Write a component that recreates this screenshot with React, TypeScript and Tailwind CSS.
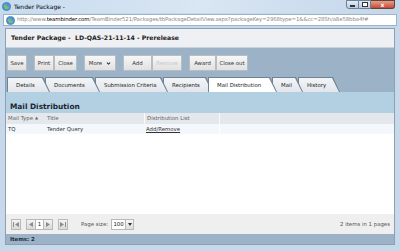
import { ChevronDown } from "lucide-react";

const toolbarGroups = [
  [{ label: "Save", w: "w-[20px]" }],
  [
    { label: "Print", w: "w-[20px]" },
    { label: "Close", w: "w-[23px]" },
  ],
  [{ label: "More", w: "w-[32px]", menu: true }],
  [
    { label: "Add", w: "w-[29px]" },
    { label: "Remove", w: "w-[30px]", disabled: true },
  ],
  [
    { label: "Award", w: "w-[27px]" },
    { label: "Close out", w: "w-[32px]" },
  ],
];

const tabs = [
  { label: "Details", w: "w-[43px]", z: "z-[7]" },
  { label: "Documents", w: "w-[55px]", z: "z-[6]" },
  { label: "Submission Criteria", w: "w-[73px]", z: "z-[5]" },
  { label: "Recipients", w: "w-[50px]", z: "z-[4]" },
  { label: "Mail Distribution", w: "w-[69px]", z: "z-[9]", active: true },
  { label: "Mail", w: "w-[31px]", z: "z-[3]" },
  { label: "History", w: "w-[42px]", z: "z-[2]" },
];

function Globe() {
  return (
    <svg width="9" height="9" viewBox="0 0 10 10">
      <circle cx="5" cy="5" r="4.5" fill="#4f93d6" />
      <path d="M2 3.5 Q4 2 5 4 T8 5 L7 8 Q5 7 3.5 8 Z" fill="#7cc26a" />
      <circle cx="5" cy="5" r="4.5" fill="none" stroke="#2f6fb0" strokeWidth="0.6" />
    </svg>
  );
}

function PagerBtn({ d }: { d: string }) {
  return (
    <div className="w-[10px] h-[11px] flex items-center justify-center bg-gradient-to-b from-[#f4f4f4] to-[#d9d9d9] border border-[#b9b9b9]">
      <svg width="6" height="5" viewBox="0 0 6 5">
        <path d={d} fill="#8c8c8c" />
      </svg>
    </div>
  );
}

export default function App() {
  return (
    <div className="w-[400px] h-[251px] flex flex-col overflow-hidden bg-[#c6d8ea] font-['DejaVu_Sans',sans-serif] text-[#222]">
      {/* Window title bar */}
      <div className="h-[13px] flex items-center bg-gradient-to-r from-[#c7dbef] via-[#d9e6f3] to-[#c3d6ea] pl-[2px]">
        <Globe />
        <span className="ml-[3px] text-[6px] text-black leading-none">Tender Package -</span>
        <div className="ml-auto flex items-start self-start mr-[5px]">
          <div className="w-[13px] h-[9px] border border-[#6b7f96] rounded-bl-[3px] bg-gradient-to-b from-[#e3ecf5] to-[#b9cbdd] flex items-end justify-center pb-[1px]">
            <div className="w-[5px] h-[1.5px] bg-white border-[0.5px] border-[#333]" />
          </div>
          <div className="w-[12px] h-[9px] border-y border-r border-[#6b7f96] bg-gradient-to-b from-[#e3ecf5] to-[#b9cbdd] flex items-center justify-center">
            <div className="w-[6px] h-[5px] border border-[#333] bg-white" />
          </div>
          <div className="w-[24px] h-[9px] border-y border-r border-[#6b4030] rounded-br-[3px] bg-gradient-to-b from-[#e2a090] to-[#c24a34] flex items-center justify-center text-white text-[6px] font-bold leading-none">
            x
          </div>
        </div>
      </div>

      {/* Address bar */}
      <div className="h-[14px] px-[3px] flex items-center">
        <div className="flex-1 h-[12px] bg-white border border-[#9db3c9] flex items-center pl-[2px] gap-[2px]">
          <Globe />
          <span className="text-[5.4px] text-[#8a8a8a] whitespace-nowrap leading-none tracking-[-0.1px]">
            http://www.<span className="text-black">teambinder.com</span>/TeamBinder521/Packages/tbPackageDetailView.aspx?packageKey=2968type=1&amp;&amp;cc=28Sh/a8e58bba4f#
          </span>
        </div>
      </div>

      {/* Page content */}
      <div className="flex-1 mx-[5px] mt-[1px] mb-[6px] flex flex-col bg-white border border-[#8aa0b6]">
        {/* Header */}
        <div className="h-[19px] bg-[#eef0f3] flex items-center pl-[5px] border-b border-[#c9d3dd]">
          <span className="text-[6.2px] font-bold text-[#222] whitespace-pre">
            Tender Package -  LD-QAS-21-11-14 - Prerelease
          </span>
        </div>

        {/* Toolbar and tabs */}
        <div className="bg-[#9cb2c6] pt-[7px] pl-[1px]">
          <div className="flex gap-[7px] h-[16px]">
            {toolbarGroups.map((g, i) => (
              <div key={i} className="flex">
                {g.map((b) => (
                  <div
                    key={b.label}
                    className={`${b.w} h-[16px] flex items-center justify-center gap-[4px] border border-[#b7bdc4] bg-gradient-to-b from-[#f7f7f7] to-[#e1e1e1] text-[5.4px] whitespace-nowrap ${
                      b.disabled ? "text-[#c8c8c8]" : "text-[#333]"
                    }`}
                  >
                    {b.label}
                    {b.menu && <ChevronDown size={5} strokeWidth={5} className="text-[#333]" />}
                  </div>
                ))}
              </div>
            ))}
          </div>

          <div className="flex h-[15px] mt-[6px]">
            {tabs.map((t) => (
              <div
                key={t.label}
                className={`${t.w} ${t.z} relative -mr-[5px] h-[15px] bg-[#6f8296] [clip-path:polygon(0_0,calc(100%-7px)_0,100%_100%,0_100%)]`}
              >
                <div
                  className={`absolute left-[1px] top-[1px] right-[1px] bottom-0 flex items-center pl-[8px] text-[5.4px] whitespace-nowrap text-[#222] [clip-path:polygon(0_0,calc(100%-7px)_0,100%_100%,0_100%)] ${
                    t.active ? "bg-white" : "bg-gradient-to-b from-[#f3f5f7] to-[#e2e6eb]"
                  }`}
                >
                  {t.label}
                </div>
              </div>
            ))}
          </div>
        </div>

        {/* Mail distribution panel */}
        <div className="flex-1 flex flex-col bg-white">
          <div className="h-[21px] bg-[#b3cfe2] flex items-end pl-[4px] pb-[3px]">
            <span className="text-[7.4px] font-bold text-[#1b2530] leading-none">Mail Distribution</span>
          </div>
          <div className="grid grid-cols-[39px_99px_75px_1fr] h-[11px] bg-[#e4e7eb] text-[5.4px] text-[#666] items-center">
            <div className="pl-[2px] flex items-center gap-[2px]">
              Mail Type <span className="text-[4px]">▲</span>
            </div>
            <div className="pl-[2px]">Title</div>
            <div className="pl-[2px] h-full flex items-center border-l border-[#fafafa]">Distribution List</div>
            <div className="h-full border-l border-[#fafafa]" />
          </div>
          <div className="grid grid-cols-[39px_99px_75px_1fr] h-[10px] text-[5.4px] text-[#333] items-center">
            <div className="pl-[2px] h-full flex items-center bg-[#f4f8fc]">TQ</div>
            <div className="pl-[2px] h-full flex items-center bg-[#f4f8fc]">Tender Query</div>
            <div className="pl-[2px] h-full flex items-center bg-[#f4f8fc] underline">Add/Remove</div>
            <div className="h-full bg-[#f4f8fc] border-l border-white" />
          </div>
          <div className="flex-1" />

          {/* Pager */}
          <div className="h-[20px] bg-[#efefef] flex items-center pl-[5px] pr-[4px] text-[5.4px] text-[#555]">
            <PagerBtn d="M0 0h1v5H0z M6 0v5L2 2.5z" />
            <div className="ml-[5px] flex items-center">
              <PagerBtn d="M5 0v5L1 2.5z" />
              <div className="w-[7px] h-[11px] bg-white border-y border-[#b9b9b9] flex items-center justify-center text-[#222]">1</div>
              <PagerBtn d="M1 0v5l4-2.5z" />
            </div>
            <div className="ml-[5px]">
              <PagerBtn d="M0 0v5l4-2.5z M5 0h1v5H5z" />
            </div>
            <span className="ml-[13px]">Page size:</span>
            <div className="ml-[3px] flex h-[11px] border border-[#b9b9b9] bg-white">
              <div className="w-[13px] flex items-center justify-center text-[#222]">100</div>
              <div className="w-[8px] border-l border-[#b9b9b9] bg-gradient-to-b from-[#f7f7f7] to-[#dedede] flex items-center justify-center">
                <svg width="4" height="3" viewBox="0 0 4 3">
                  <path d="M0 0h4L2 3z" fill="#333" />
                </svg>
              </div>
            </div>
            <span className="ml-auto">2 items in 1 pages</span>
          </div>

          {/* Status bar */}
          <div className="h-[10px] bg-[#9cb2c6] flex items-center pl-[4px]">
            <span className="text-[5.4px] font-bold text-[#1d2a36]">Items: 2</span>
          </div>
        </div>
      </div>
    </div>
  );
}
